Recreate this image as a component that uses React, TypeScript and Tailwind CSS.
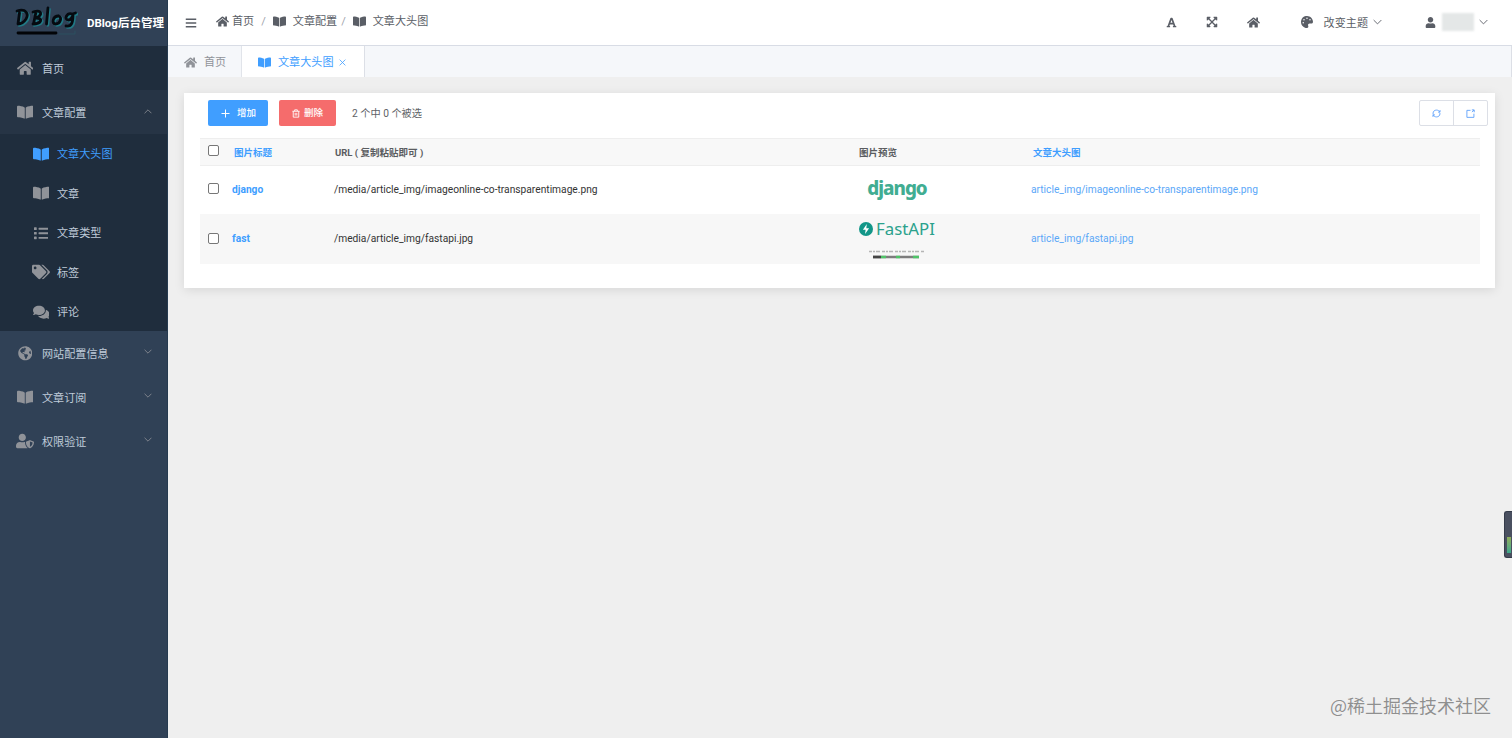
import { FaBars, FaBookOpen, FaComments, FaExpandArrowsAlt, FaFont, FaGlobeAmericas, FaHome, FaList, FaPalette, FaTags, FaUser, FaUserShield } from 'react-icons/fa'
import type { IconType } from 'react-icons'

type MenuItem = { label: string; icon: IconType; size: string; active?: boolean }

// Font Awesome glyphs differ in width, so each one carries its own size
const subMenu: MenuItem[] = [
  { label: '文章大头图', icon: FaBookOpen, size: 'size-[16.5px]', active: true },
  { label: '文章', icon: FaBookOpen, size: 'size-[16.5px]' },
  { label: '文章类型', icon: FaList, size: 'size-[14.5px]' },
  { label: '标签', icon: FaTags, size: 'size-[18px]' },
  { label: '评论', icon: FaComments, size: 'size-[16.5px]' },
]

const bottomMenu: MenuItem[] = [
  { label: '网站配置信息', icon: FaGlobeAmericas, size: 'size-[14.5px]' },
  { label: '文章订阅', icon: FaBookOpen, size: 'size-[16.5px]' },
  { label: '权限验证', icon: FaUserShield, size: 'size-[18px]' },
]

const rows = [
  { title: 'django', path: 'article_img/imageonline-co-transparentimage.png', preview: <DjangoPreview />, rowClass: 'h-12 bg-white', textClass: '', checkClass: 'pb-[2px]' },
  { title: 'fast', path: 'article_img/fastapi.jpg', preview: <FastApiPreview />, rowClass: 'h-[50px] bg-[#f7f7f7]', textClass: 'pt-px', checkClass: 'pb-px' },
]

function Chevron({ up = false, className = 'h-[5px] w-2' }: { up?: boolean; className?: string }) {
  return (
    <svg viewBox="0 0 10 6" className={className} fill="none" stroke="currentColor" strokeWidth="1">
      <path d={up ? 'M.7 5.2 5 .9l4.3 4.3' : 'M.7.8 5 5.1 9.3.8'} />
    </svg>
  )
}

const logoStrokes =
  'M5.5 8 4 19M3 6c9-3 12 3 9 8-2 3-5 5-8 5M22 7l-2.500 12M19 7c9-3 10 3 3 6 8 0 5 6-3 6M34 3l-1.500 16M44.500 11c-6 0-7 8-3 8 5 0 7-7 3-8M58.500 9c-6-2-9 6-4 6 3 0 4-3 4.500-6 0 8-1 13-7 12M58.500 9l3-1'

function Logo() {
  return (
    <svg viewBox="0 0 64 32" className="h-8 w-16 shrink-0" fill="none" strokeLinecap="round" strokeLinejoin="round">
      <path d={logoStrokes} stroke="#217985" strokeWidth="3" transform="translate(1.3 1.2)" />
      <path d={logoStrokes} stroke="#050a10" strokeWidth="2.8" />
      <path d="M4 28h38" stroke="#020407" strokeWidth="2.8" />
      <path d="M45 29h16v-3" stroke="#2c5463" strokeWidth="0.8" />
    </svg>
  )
}

function DjangoPreview() {
  return <span className="mb-[3px] block w-[78px] text-center font-['Noto_Sans',sans-serif] text-[18.8px]/[24px] font-extrabold tracking-[-1px] text-[#41ad92]">django</span>
}

function FastApiPreview() {
  return (
    <div className="flex h-[42px] w-[78px] flex-col items-center pt-px">
      <div className="flex h-5 items-center gap-[3px]">
        <svg viewBox="0 0 14 14" className="size-[14px] shrink-0">
          <circle cx="7" cy="7" r="7" fill="#129688" />
          <path d="M7.8 2 3.9 7.8h2.7l-.5 4.2 4-5.8H7.3z" fill="#fff" />
        </svg>
        <span className="font-['Noto_Sans',sans-serif] text-[16.8px]/[20px] text-[#2ba18c]">FastAPI</span>
      </div>
      <svg viewBox="0 0 58 10" className="mt-[10px] h-[10px] w-[58px] shrink-0">
        <path d="M1 2.500h56" stroke="#b5b5b5" strokeWidth="1.6" strokeDasharray="3 1 2 1 4 2" />
        <path d="M5 8h46" stroke="#7d7d7d" strokeWidth="2.6" />
        <path d="M5 8h8" stroke="#444" strokeWidth="2.6" />
        <path d="M13 8h5M28 8h4M45 8h6" stroke="#4fc468" strokeWidth="2.6" />
      </svg>
    </div>
  )
}

function MenuIcon({ icon: Icon, size, active = false }: { icon: IconType; size: string; active?: boolean }) {
  return (
    <span className={`flex w-[18px] shrink-0 justify-center ${active ? 'text-[#409eff]' : 'text-[#909399]'}`}>
      <Icon className={`shrink-0 ${size}`} />
    </span>
  )
}

function Sidebar() {
  return (
    <aside className="flex w-[168px] shrink-0 flex-col border-r border-[#263b50] bg-[#304156] text-[11.1px] text-[#bfcbd9]">
      <div className="flex h-[46px] items-start pl-[14px] pt-[5px]">
        <Logo />
        <span className="ml-[9px] mt-[9px] whitespace-nowrap text-[11.5px]/[18px] font-bold text-white">DBlog后台管理</span>
      </div>
      <div className="flex h-11 items-center bg-[#1f2d3d] pl-4 pt-px">
        <MenuIcon icon={FaHome} size="size-[16.5px]" />
        <span className="ml-2 pt-[3px]">首页</span>
      </div>
      <div className="flex h-11 items-center bg-[#263445] pl-4 pr-[15px] pt-px">
        <MenuIcon icon={FaBookOpen} size="size-[16.5px]" />
        <span className="ml-2 pt-[3px]">文章配置</span>
        <Chevron up className="mb-[3px] ml-auto h-[5px] w-2 text-[#909399]" />
      </div>
      <div className="bg-[#1f2d3d]">
        {subMenu.map(({ label, icon, size, active }) => (
          <div key={label} className={`flex h-[39.4px] items-center pl-8 pt-px ${active ? 'text-[#409eff]' : ''}`}>
            <MenuIcon icon={icon} size={size} active={active} />
            <span className="ml-[7px] pt-[3px]">{label}</span>
          </div>
        ))}
      </div>
      {bottomMenu.map(({ label, icon, size }) => (
        <div key={label} className="flex h-11 items-center pl-4 pr-[15px] pt-px">
          <MenuIcon icon={icon} size={size} />
          <span className="ml-2 pt-[3px]">{label}</span>
          <Chevron className="mb-[3px] ml-auto h-[5px] w-2 text-[#909399]" />
        </div>
      ))}
    </aside>
  )
}

function Header() {
  return (
    <header className="flex h-[46px] items-center border-b border-[#d8dce5] bg-white text-[11.1px] text-[#5a5e66]">
      <FaBars className="ml-[17px] size-[12px]" />
      <nav className="mb-[2px] ml-[19px] flex items-center">
        <FaHome className="size-[13px]" />
        <span className="ml-[3px] pt-px">首页</span>
        <span className="mx-[7px] pt-px text-[#a0a4ac]">/</span>
        <FaBookOpen className="size-[13px]" />
        <span className="ml-[7px] pt-px">文章配置</span>
        <span className="ml-1 mr-[7px] pt-px text-[#a0a4ac]">/</span>
        <FaBookOpen className="size-[13px]" />
        <span className="ml-[7px] pt-px">文章大头图</span>
      </nav>
      <div className="ml-auto flex items-center">
        <FaFont className="size-[11px]" />
        <FaExpandArrowsAlt className="ml-[29px] size-[12px]" />
        <FaHome className="ml-[29px] size-[13px]" />
        <FaPalette className="ml-[41px] size-3" />
        <span className="ml-[11px] pt-[3px]">改变主题</span>
        <Chevron className="ml-[5px] h-[6px] w-[9px]" />
        <FaUser className="ml-[43px] size-[11px]" />
        <span className="ml-[6px] h-[18px] w-8 bg-[#e4e7e7] blur-[1px]" />
        <Chevron className="ml-[5px] mr-[24px] h-[6px] w-[9px]" />
      </div>
    </header>
  )
}

function Tabs() {
  return (
    <div className="flex h-[31px] border-r border-[#dcdfe6] bg-[#f5f7fa] text-[11.1px]">
      <div className="flex w-[74px] items-center border-r border-[#e1e4ea] pl-4 pt-px text-[#909399]">
        <FaHome className="size-[13px]" />
        <span className="ml-[7px] pt-[3px]">首页</span>
      </div>
      <div className="flex w-[123px] items-center border-r border-[#dcdfe6] bg-white pl-4 pt-px text-[#409eff]">
        <FaBookOpen className="size-[13px]" />
        <span className="ml-[7px] pt-[3px]">文章大头图</span>
        <svg viewBox="0 0 8 8" className="ml-[6px] mt-px size-[7px]" fill="none" stroke="currentColor" strokeWidth="0.9">
          <path d="m.7.7 6.6 6.6m0-6.6L.7 7.3" />
        </svg>
      </div>
    </div>
  )
}

function Checkbox() {
  return <input type="checkbox" className="block size-[11px] appearance-none rounded-[2px] border border-[#777] bg-white" />
}

function Toolbar() {
  return (
    <div className="flex h-[26px] items-center pl-2 text-[9.5px]">
      <button className="flex h-[26px] w-[60px] items-center rounded-[2px] bg-[#409eff] pl-[13px] font-medium text-white">
        <svg viewBox="0 0 9 9" className="size-[9px]" stroke="currentColor"><path d="M4.5.5v8M.5 4.5h8" /></svg>
        <span className="ml-[7px] pt-px">增加</span>
      </button>
      <button className="ml-[11px] flex h-[26px] w-[57px] items-center rounded-[2px] bg-[#f56c6c] pl-[13px] font-medium text-white">
        <svg viewBox="0 0 9 10" className="h-[9px] w-2" fill="none" stroke="currentColor" strokeWidth="1">
          <path d="M.5 2.5h8M3 2.3V.9h3v1.4M1.4 2.5v6.6h6.2V2.5M3.6 4.3v3M5.4 4.3v3" />
        </svg>
        <span className="ml-1 pt-px">删除</span>
      </button>
      <span className="ml-4 pt-px text-[10.2px] text-[#606266]">2 个中 0 个被选</span>
      <div className="ml-auto mr-[-9px] flex h-[26px] w-[69px] shrink-0 rounded-[2px] border border-[#dcdfe6] text-[#5ea0fb]">
        <button className="flex w-[34px] items-center justify-center border-r border-[#dcdfe6]">
          <svg viewBox="0 0 10 10" className="size-[9px]" fill="none" stroke="currentColor" strokeWidth="1">
            <path d="M1.2 6V4.500c0-2 1.800-3.300 3.800-3.300 1.600 0 3 .8 3.700 2.200M8.900 1.200v2.300H6.800M8.800 4.500v1c0 2-1.800 3.300-3.800 3.300-1.600 0-3-.8-3.700-2.200M1.100 8.800V6.500h2.100" />
          </svg>
        </button>
        <button className="flex flex-1 items-center justify-center">
          <svg viewBox="0 0 10 10" className="size-[9px]" fill="none" stroke="currentColor" strokeWidth="1">
            <path d="M5 1.500H1v7.800h7.800V5.200M6.500 1h2.600v2.600M9 1.100 6.600 3.500" />
          </svg>
        </button>
      </div>
    </div>
  )
}

function ImageTable() {
  return (
    <table className="mt-3 w-[1280px] table-fixed text-left text-[10.23px]">
      <colgroup>
        <col className="w-8" />
        <col className="w-[102px]" />
        <col className="w-[524px]" />
        <col className="w-[173px]" />
        <col />
      </colgroup>
      <thead>
        <tr className="h-[27px] border-y border-[#eeeeee] bg-[#f8f8f8] text-[9.5px] text-[#5a5c60]">
          <th className="pb-[3px] pl-2"><Checkbox /></th>
          <th className="pl-[2px] pt-[2px] text-[#409eff]">图片标题</th>
          <th className="pl-[1px] pt-[2px]">URL ( 复制粘贴即可 )</th>
          <th className="pl-[1px] pt-[2px]">图片预览</th>
          <th className="pl-[2px] pt-[2px] text-[#409eff]">文章大头图</th>
        </tr>
      </thead>
      <tbody>
        {rows.map((row) => (
          <tr key={row.title} className={row.rowClass}>
            <td className={`pl-2 ${row.checkClass}`}><Checkbox /></td>
            <td className={`font-bold text-[#409eff] ${row.textClass}`}>{row.title}</td>
            <td className={`text-[#333] ${row.textClass}`}>/media/{row.path}</td>
            <td>{row.preview}</td>
            <td className={`text-[#5aa7f8] ${row.textClass}`}>{row.path}</td>
          </tr>
        ))}
      </tbody>
    </table>
  )
}

export default function App() {
  return (
    <div className="relative flex h-[738px] w-[1512px] overflow-hidden bg-[#efefef] font-[Roboto,'Noto_Sans_CJK_SC',sans-serif]">
      <Sidebar />
      <div className="flex min-w-0 flex-1 flex-col">
        <Header />
        <Tabs />
        <main className="ml-4 mr-[17px] mt-4 h-[195px] bg-white px-4 pt-[7px] shadow-[0_2px_10px_rgba(0,0,0,0.1)]">
          <Toolbar />
          <ImageTable />
        </main>
      </div>
      <div className="absolute right-0 top-[511px] flex h-[47px] w-2 items-end rounded-l-[3px] border border-r-0 border-[#353c4a] bg-[#4a5060] pb-1 pl-[2px]">
        <span className="h-4 w-1 bg-linear-to-b from-[#8fae5a] to-[#39a78c]" />
      </div>
      <span className="absolute bottom-5 right-[21px] font-['Noto_Sans_CJK_SC',sans-serif] text-[18px]/[26px] text-[#8f8f8f] [text-shadow:0_0_1px_#fff]">@稀土掘金技术社区</span>
    </div>
  )
}
